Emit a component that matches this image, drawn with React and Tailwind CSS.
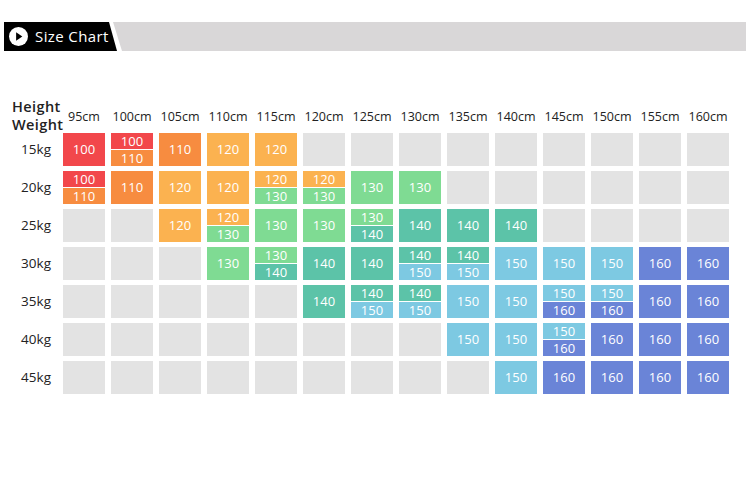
const C = {
  r: "bg-[#f2474b]",
  o: "bg-[#f78c40]",
  y: "bg-[#fbb250]",
  g: "bg-[#7fdb93]",
  t: "bg-[#5cc3a8]",
  b: "bg-[#7dc9e2]",
  d: "bg-[#6a84d7]",
};

const SIZE = { r: 100, o: 110, y: 120, g: 130, t: 140, b: 150, d: 160 };

const heights = [95, 100, 105, 110, 115, 120, 125, 130, 135, 140, 145, 150, 155, 160];

// each row: cell codes, "" = empty, "xy" = split top/bottom
const rows = [
  { kg: 15, cells: ["r", "ro", "o", "y", "y", "", "", "", "", "", "", "", "", ""] },
  { kg: 20, cells: ["ro", "o", "y", "y", "yg", "yg", "g", "g", "", "", "", "", "", ""] },
  { kg: 25, cells: ["", "", "y", "yg", "g", "g", "gt", "t", "t", "t", "", "", "", ""] },
  { kg: 30, cells: ["", "", "", "g", "gt", "t", "t", "tb", "tb", "b", "b", "b", "d", "d"] },
  { kg: 35, cells: ["", "", "", "", "", "t", "tb", "tb", "b", "b", "bd", "bd", "d", "d"] },
  { kg: 40, cells: ["", "", "", "", "", "", "", "", "b", "b", "bd", "d", "d", "d"] },
  { kg: 45, cells: ["", "", "", "", "", "", "", "", "", "b", "d", "d", "d", "d"] },
];

const Cell = ({ code }) => {
  if (!code) return <div className="h-[33px] bg-[#e3e3e3]" />;
  if (code.length === 1) {
    return (
      <div className={`${C[code]} h-[33px] flex items-center justify-center text-white text-[13px]`}>
        {SIZE[code]}
      </div>
    );
  }
  return (
    <div className="h-[33px] flex flex-col gap-[1px] text-white text-[13px] leading-none">
      <div className={`${C[code[0]]} h-[16px] flex items-center justify-center`}>{SIZE[code[0]]}</div>
      <div className={`${C[code[1]]} flex-1 flex items-center justify-center`}>{SIZE[code[1]]}</div>
    </div>
  );
};

export default function App() {
  return (
    <div className="w-[750px] h-[483px] bg-white font-['Open_Sans','Liberation_Sans',sans-serif] text-[#222]">
      <div className="pt-[22px] pl-[4px] pr-[4px] flex h-[51px]">
        <div className="w-[113px] h-[29px] bg-black flex items-center gap-[7px] pl-[5px] [clip-path:polygon(0_0,105px_0,113px_100%,0_100%)]">
          <svg width="19" height="19" viewBox="0 0 20 20">
            <circle cx="10" cy="10" r="10" fill="#fff" />
            <path d="M7.5 5.5 L14 10 L7.5 14.5 Z" fill="#000" />
          </svg>
          <span className="text-white text-[15px] tracking-[0.4px]">Size Chart</span>
        </div>
        <div className="flex-1 h-[29px] ml-[-4px] bg-[#d9d7d8] [clip-path:polygon(0_0,100%_0,100%_100%,9px_100%)]" />
      </div>

      <div className="mt-[40px] grid grid-cols-[57px_repeat(14,42px)] gap-x-[6px] gap-y-[5px]">
        <div className="h-[37px] flex flex-col pl-[12px] pt-[7px] text-[14.5px] leading-[18px] font-semibold tracking-[0.4px]">
          <span>Height</span>
          <span>Weight</span>
        </div>
        {heights.map((h) => (
          <div key={h} className="h-[37px] flex items-end justify-center pb-[3px] text-[12.5px] leading-[16px] text-[#222]">
            {h}cm
          </div>
        ))}
        {rows.map((row) => (
          <>
            <div key={`l${row.kg}`} className="h-[33px] flex items-center justify-end pr-[6px] text-[13.5px]">
              {row.kg}kg
            </div>
            {row.cells.map((c, i) => (
              <Cell key={`${row.kg}-${i}`} code={c} />
            ))}
          </>
        ))}
      </div>
    </div>
  );
}
